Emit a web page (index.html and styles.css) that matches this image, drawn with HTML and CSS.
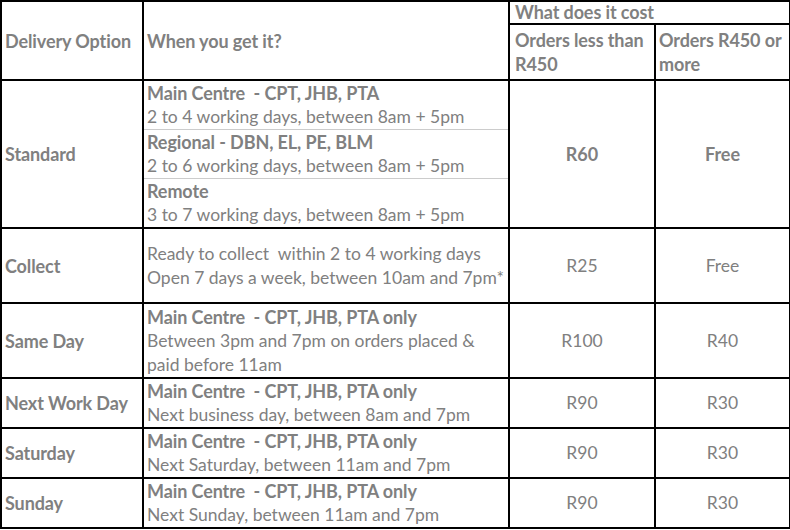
FILE: index.html
```html
<!DOCTYPE html>
<html lang="en">
<head>
<meta charset="utf-8">
<title>Delivery Options</title>
<link rel="stylesheet" href="styles.css">
</head>
<body>
<table class="delivery">
  <colgroup>
    <col class="c-opt">
    <col class="c-when">
    <col class="c-less">
    <col class="c-more">
  </colgroup>
  <thead>
    <tr class="h1">
      <th rowspan="2">Delivery Option</th>
      <th rowspan="2">When you get it?</th>
      <th colspan="2" class="cost">What does it cost</th>
    </tr>
    <tr class="h2">
      <th class="top first">Orders less than R450</th>
      <th class="top">Orders R450 or more</th>
    </tr>
  </thead>
  <tbody>
    <tr>
      <td rowspan="3" class="opt">Standard</td>
      <td class="when split"><span class="loc">Main Centre&nbsp; - CPT, JHB, PTA</span><span class="eta">2 to 4 working days, between 8am + 5pm</span></td>
      <td rowspan="3" class="price strong">R60</td>
      <td rowspan="3" class="price strong">Free</td>
    </tr>
    <tr>
      <td class="when split cont"><span class="loc">Regional - DBN, EL, PE, BLM</span><span class="eta">2 to 6 working days, between 8am + 5pm</span></td>
    </tr>
    <tr>
      <td class="when cont"><span class="loc">Remote</span><span class="eta">3 to 7 working days, between 8am + 5pm</span></td>
    </tr>
    <tr class="tall">
      <td class="opt">Collect</td>
      <td class="when"><span class="eta">Ready to collect&nbsp; within 2 to 4 working days</span><span class="eta">Open 7 days a week, between 10am and 7pm*</span></td>
      <td class="price">R25</td>
      <td class="price">Free</td>
    </tr>
    <tr class="tall">
      <td class="opt">Same Day</td>
      <td class="when"><span class="loc">Main Centre&nbsp; - CPT, JHB, PTA only</span><span class="eta">Between 3pm and 7pm on orders placed &amp;</span><span class="eta">paid before 11am</span></td>
      <td class="price">R100</td>
      <td class="price">R40</td>
    </tr>
    <tr class="std">
      <td class="opt">Next Work Day</td>
      <td class="when"><span class="loc">Main Centre&nbsp; - CPT, JHB, PTA only</span><span class="eta">Next business day, between 8am and 7pm</span></td>
      <td class="price">R90</td>
      <td class="price">R30</td>
    </tr>
    <tr class="std">
      <td class="opt">Saturday</td>
      <td class="when"><span class="loc">Main Centre&nbsp; - CPT, JHB, PTA only</span><span class="eta">Next Saturday, between 11am and 7pm</span></td>
      <td class="price">R90</td>
      <td class="price">R30</td>
    </tr>
    <tr class="std">
      <td class="opt">Sunday</td>
      <td class="when"><span class="loc">Main Centre&nbsp; - CPT, JHB, PTA only</span><span class="eta">Next Sunday, between 11am and 7pm</span></td>
      <td class="price">R90</td>
      <td class="price">R30</td>
    </tr>
  </tbody>
</table>
</body>
</html>
```

FILE: styles.css
```css
html, body {
  margin: 0;
  padding: 0;
  background: #ffffff;
}

body {
  font-family: Lato, "Open Sans", sans-serif;
  font-size: 17.5px;
  line-height: 24px;
  color: #808080;
}

.delivery {
  border-collapse: collapse;
  width: 789px;
  table-layout: fixed;
}

.c-opt { width: 142px; }
.c-when { width: 366px; }
.c-less { width: 146px; }
.c-more { width: 135px; }

.delivery th,
.delivery td {
  border: 2px solid #000000;
  padding: 0 3px;
  text-align: left;
  vertical-align: middle;
}

.delivery th {
  font-weight: 700;
  font-size: 18px;
  letter-spacing: -0.1px;
}

.delivery th.cost {
  line-height: 20px;
  padding: 0 0 1px 5px;
  vertical-align: top;
}

.delivery th.top {
  vertical-align: top;
  padding-top: 3px;
}

.delivery th.first {
  padding-left: 5px;
}

.h1 { height: 23px; }
.h2 { height: 56px; }

.tall { height: 75px; }
.std { height: 50px; }

.delivery td.when {
  vertical-align: top;
  white-space: nowrap;
}

.tall td.when,
.std td.when {
  vertical-align: middle;
}

.loc,
.eta {
  display: block;
  height: 24px;
  line-height: 24px;
}

.loc {
  font-weight: 700;
  font-size: 18px;
  letter-spacing: -0.1px;
}

.delivery td.split {
  border-bottom: 1px solid #cccccc;
}

.delivery td.cont {
  border-top: 1px solid #cccccc;
}

.opt {
  font-weight: 700;
  font-size: 18px;
  letter-spacing: -0.1px;
}

.delivery td.price {
  text-align: center;
}

.price.strong {
  font-weight: 700;
  font-size: 18px;
}
```
